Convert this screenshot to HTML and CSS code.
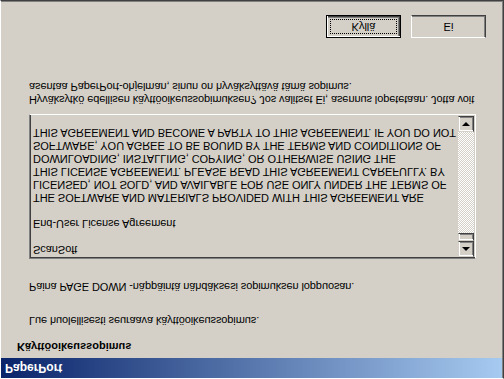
FILE: index.html
```html
<!doctype html>
<html lang="fi">

<head>
    <meta charset="utf-8">
    <title>PaperPort</title>
    <link rel="stylesheet" href="styles.css">
</head>

<body>
    <div class="window">
        <div class="titlebar"><span class="title">PaperPort</span></div>
        <div class="content">
            <h1 class="heading">Käyttöoikeussopimus</h1>
            <p class="intro">Lue huolellisesti seuraava käyttöoikeussopimus.</p>
            <p class="hint">Paina PAGE DOWN -näppäintä nähdäksesi sopimuksen loppuosan.</p>
            <div class="license">
                <div class="license-text">ScanSoft

End-User License Agreement

THE SOFTWARE AND MATERIALS PROVIDED WITH THIS AGREEMENT ARE
LICENSED, NOT SOLD, AND AVAILABLE FOR USE ONLY UNDER THE TERMS OF
THIS LICENSE AGREEMENT. PLEASE READ THIS AGREEMENT CAREFULLY. BY
DOWNLOADING, INSTALLING, COPYING, OR OTHERWISE USING THE
SOFTWARE, YOU AGREE TO BE BOUND BY THE TERMS AND CONDITIONS OF
THIS AGREEMENT AND BECOME A PARTY TO THIS AGREEMENT. IF YOU DO NOT</div>
                <div class="scrollbar">
                    <div class="arrow"><span class="tri up"></span></div>
                    <div class="thumb"></div>
                    <div class="track"></div>
                    <div class="arrow"><span class="tri down"></span></div>
                </div>
            </div>
            <p class="question">Hyväksytkö edellisen käyttöoikeussopimuksen? Jos valitset Ei, asennus lopetetaan. Jotta voit<br>asentaa PaperPort-ohjelman, sinun on hyväksyttävä tämä sopimus.</p>
            <div class="buttons">
                <button class="btn default"><span class="focus">Kyllä</span></button>
                <button class="btn">Ei</button>
            </div>
        </div>
    </div>
</body>

</html>
```

FILE: styles.css
```css
html,
body {
    margin: 0;
    padding: 0;
    overflow: hidden;
    background: #d4d0c8
}

/* the whole dialog is shown mirrored top to bottom */
.window {
    box-sizing: border-box;
    width: 504px;
    height: 379px;
    background: #d4d0c8;
    border-top: 1px solid #fff;
    border-left: 1px solid #fff;
    border-right: 1px solid #404040;
    border-bottom: 1px solid #404040;
    box-shadow: inset -1px -1px 0 #808080;
    font-family: "Liberation Sans", Arial, sans-serif;
    font-size: 11px;
    line-height: 13px;
    letter-spacing: -0.1px;
    color: #000;
    transform: scaleY(-1);
    display: flex;
    flex-direction: column
}

.titlebar {
    height: 20px;
    margin-right: 1px;
    background: linear-gradient(to right, #0a246a, #a6caf0);
    display: flex;
    align-items: center;
    padding-left: 4px
}

.title {
    color: #fff;
    font-weight: bold;
    font-size: 12px;
    letter-spacing: 0
}

.content {
    padding-left: 28px;
    display: flex;
    flex-direction: column
}

.heading {
    margin: 5px 0 0 -12px;
    font-size: 11px;
    line-height: 13px;
    font-weight: bold;
    letter-spacing: 0
}

.intro {
    margin: 13px 0 0
}

.hint {
    margin: 21px 0 0
}

.license {
    box-sizing: border-box;
    margin-top: 21px;
    width: 447px;
    height: 145px;
    border: 1px solid;
    border-color: #808080 #fff #fff #808080;
    box-shadow: inset 1px 1px 0 #404040, inset -1px -1px 0 #d4d0c8;
    padding: 1px;
    display: flex
}

.license-text {
    flex: 1;
    padding: 1px 0 0 2px;
    white-space: pre;
    overflow: hidden;
    letter-spacing: -0.05px
}

.scrollbar {
    width: 16px;
    display: flex;
    flex-direction: column
}

.arrow,
.thumb {
    box-sizing: border-box;
    background: #d4d0c8;
    border: 1px solid;
    border-color: #d4d0c8 #404040 #404040 #d4d0c8;
    box-shadow: inset 1px 1px 0 #fff, inset -1px -1px 0 #808080
}

.arrow {
    height: 16px;
    display: flex;
    align-items: center;
    justify-content: center
}

.thumb {
    height: 8px
}

.track {
    flex: 1;
    background: repeating-conic-gradient(#d4d0c8 0 25%, #fff 0 50%) 0 0 / 2px 2px
}

.tri {
    width: 0;
    height: 0;
    border-left: 4px solid transparent;
    border-right: 4px solid transparent
}

.tri.up {
    border-bottom: 4px solid #000;
    margin-top: -1px
}

.tri.down {
    border-top: 4px solid #000
}

.question {
    margin: 8px 0 0;
    width: 447px;
    white-space: nowrap
}

.buttons {
    margin-top: 42px;
    padding-left: 297px;
    display: flex;
    gap: 10px
}

.btn {
    box-sizing: border-box;
    width: 75px;
    height: 23px;
    padding: 0;
    font: inherit;
    color: #000;
    background: #d4d0c8;
    border: 1px solid;
    border-color: #fff #404040 #404040 #fff;
    box-shadow: inset -1px -1px 0 #808080;
    display: flex;
    align-items: center;
    justify-content: center
}

.btn.default {
    border: 1px solid #000;
    box-shadow: inset 1px 1px 0 #fff, inset -1px -1px 0 #404040, inset -2px -2px 0 #808080;
    padding: 3px
}

.focus {
    flex: 1;
    align-self: stretch;
    display: flex;
    align-items: center;
    justify-content: center;
    outline: 1px dotted #000;
    outline-offset: -1px
}
```
